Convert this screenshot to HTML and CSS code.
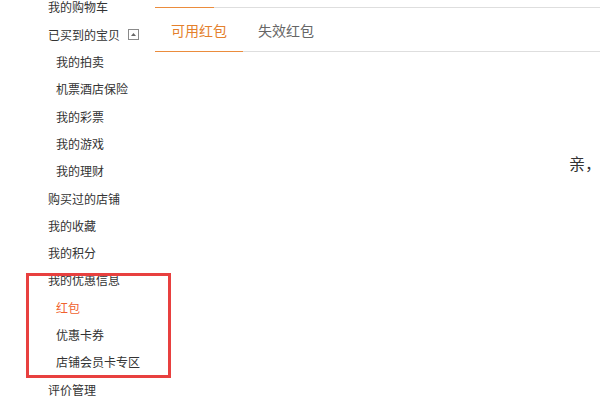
FILE: index.html
```html
<!DOCTYPE html>
<html lang="zh-CN">
<head>
<meta charset="utf-8">
<link rel="stylesheet" href="styles.css">
</head>
<body>
<div class="page">
  <aside class="sidebar">
    <ul class="menu">
      <li class="item">我的购物车</li>
      <li class="item">已买到的宝贝<svg class="toggle" width="11" height="11" viewBox="0 0 11 11"><rect x="0.5" y="0.5" width="10" height="10" fill="#fff" stroke="#8a8a8a"/><path d="M3 7 L5.5 4 L8 7 Z" fill="#666"/></svg></li>
      <li class="item sub">我的拍卖</li>
      <li class="item sub">机票酒店保险</li>
      <li class="item sub">我的彩票</li>
      <li class="item sub">我的游戏</li>
      <li class="item sub">我的理财</li>
      <li class="item">购买过的店铺</li>
      <li class="item">我的收藏</li>
      <li class="item">我的积分</li>
      <li class="item">我的优惠信息</li>
      <li class="item sub active">红包</li>
      <li class="item sub">优惠卡券</li>
      <li class="item sub">店铺会员卡专区</li>
      <li class="item">评价管理</li>
    </ul>
    <div class="highlight"></div>
  </aside>
  <main class="main">
    <div class="tabs">
      <div class="tab active">可用红包</div>
      <div class="tab">失效红包</div>
    </div>
    <div class="content">
      <p class="empty">亲，</p>
    </div>
  </main>
</div>
</body>
</html>
```
FILE: styles.css
```css
html, body {
  margin: 0;
  padding: 0;
  background: #fff;
  overflow: hidden;
}
body {
  width: 600px;
  height: 400px;
  font-family: "Noto Sans CJK SC", "Microsoft YaHei", sans-serif;
  color: #333;
}
.page {
  display: flex;
  width: 600px;
  height: 400px;
}
.sidebar {
  position: relative;
  width: 155px;
  flex: 0 0 155px;
}
.menu {
  list-style: none;
  margin: -6.7px 0 0 0;
  padding: 0;
}
.item {
  display: flex;
  align-items: center;
  height: 27.3px;
  padding-left: 48px;
  font-size: 12px;
  color: #333;
  white-space: nowrap;
}
.item.sub {
  padding-left: 56px;
}
.item.active {
  color: #f0622e;
}
.toggle {
  margin-left: 8px;
  display: block;
}
.highlight {
  position: absolute;
  left: 26px;
  top: 273px;
  width: 139px;
  height: 99px;
  border: 3px solid #e8403f;
}
.main {
  flex: 1;
  min-width: 0;
  margin-top: 7px;
  border-top: 1px solid #dedede;
}
.tabs {
  display: flex;
  height: 43px;
  border-bottom: 1px solid #dedede;
}
.tab {
  position: relative;
  display: flex;
  align-items: center;
  padding-left: 16px;
  padding-right: 16px;
  font-size: 14px;
  color: #666;
  white-space: nowrap;
}
.tab + .tab {
  padding-left: 15px;
}
.tab.active {
  color: #e4802c;
}
.tab.active::before {
  content: "";
  position: absolute;
  left: 0;
  top: -1px;
  width: 59px;
  height: 1px;
  background: #eb8c3d;
}
.tab.active::after {
  content: "";
  position: absolute;
  left: 0;
  bottom: -1px;
  width: 88px;
  height: 1px;
  background: #eb8c3d;
}
.content {
  padding-left: 414px;
}
.empty {
  margin: 99px 0 0 0;
  font-size: 16px;
  line-height: 24px;
  color: #333;
  white-space: nowrap;
}
```
